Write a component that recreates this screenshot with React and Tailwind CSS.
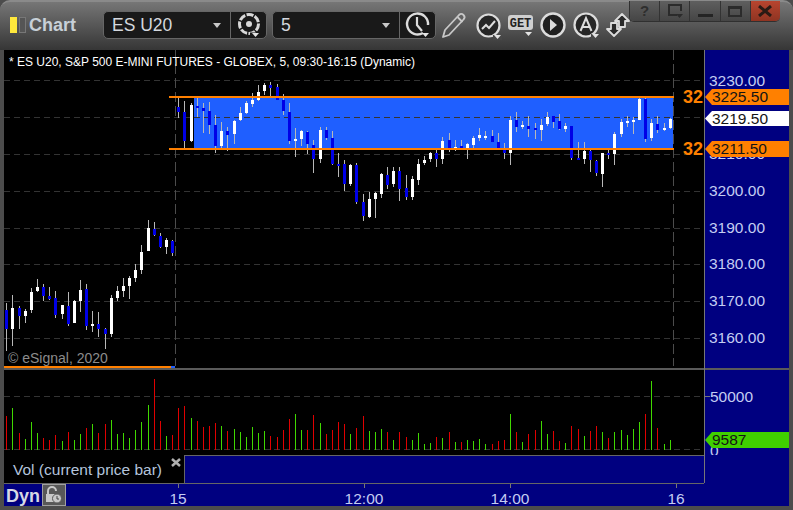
import React from 'react';

const FONT = "font-['Liberation_Sans',Arial,sans-serif]";

// candles read off the reference: [x, wick top, wick bottom, body top, body bottom, colour]
const morning = [
  [6, 303, 351, 310, 329, 'b'], [12, 295, 346, 308, 329, 'w'], [19, 306, 329, 308, 316, 'b'], [25, 309, 323, 311, 316, 'w'],
  [31, 288, 313, 292, 310, 'w'], [37, 279, 292, 287, 291, 'w'], [43, 284, 301, 287, 296, 'b'], [49, 287, 300, 296, 299, 'b'],
  [55, 291, 318, 298, 315, 'b'], [62, 305, 319, 305, 314, 'w'], [68, 292, 326, 306, 324, 'b'], [74, 300, 323, 301, 323, 'w'],
  [80, 280, 312, 290, 301, 'w'], [86, 284, 330, 289, 326, 'b'], [92, 311, 332, 324, 326, 'w'], [98, 312, 337, 324, 329, 'b'],
  [105, 328, 349, 329, 334, 'b'], [111, 295, 337, 298, 334, 'w'], [117, 286, 301, 291, 298, 'w'], [123, 278, 297, 286, 291, 'w'],
  [129, 276, 299, 278, 286, 'w'], [135, 264, 282, 270, 278, 'w'], [141, 245, 274, 252, 270, 'w'], [148, 220, 251, 228, 251, 'w'],
  [154, 222, 236, 229, 235, 'b'], [160, 233, 248, 236, 247, 'b'], [166, 238, 254, 240, 247, 'w'], [172, 240, 256, 241, 253, 'b'],
];

const offsetCandles = (rows, dx, dy) =>
  rows.map(([x, a, b, c, d, k]) => [Math.round(x / 3 + dx), a / 3 + dy, b / 3 + dy, c / 3 + dy, d / 3 + dy, k]);

const midday = offsetCandles([
  [55, 66, 129, 96, 111, 'b'], [73, 78, 222, 111, 198, 'b'], [94, 84, 201, 90, 198, 'w'], [112, 69, 126, 93, 99, 'b'],
  [130, 84, 174, 99, 108, 'b'], [148, 81, 177, 108, 150, 'b'], [166, 120, 234, 150, 213, 'b'], [184, 141, 219, 168, 213, 'w'],
  [202, 156, 228, 168, 180, 'b'], [223, 135, 207, 138, 177, 'w'], [241, 96, 138, 114, 135, 'w'], [259, 78, 117, 84, 114, 'w'],
  [277, 54, 96, 75, 87, 'w'], [295, 30, 78, 51, 75, 'w'], [313, 24, 60, 30, 48, 'w'], [331, 21, 63, 30, 39, 'b'],
  [352, 27, 75, 36, 75, 'b'], [370, 57, 120, 75, 108, 'b'], [388, 84, 207, 111, 198, 'b'], [406, 159, 246, 192, 198, 'w'],
  [424, 165, 213, 168, 192, 'w'], [442, 168, 237, 171, 207, 'b'], [460, 195, 294, 210, 252, 'b'], [481, 156, 264, 165, 252, 'w'],
  [499, 156, 195, 165, 189, 'b'], [517, 168, 270, 189, 267, 'b'], [535, 234, 306, 267, 273, 'b'], [553, 255, 348, 267, 327, 'b'],
  [571, 267, 333, 270, 327, 'w'], [589, 264, 387, 270, 381, 'b'], [610, 357, 438, 381, 423, 'b'], [628, 351, 429, 372, 426, 'w'],
  [646, 351, 429, 354, 372, 'w'], [664, 294, 369, 297, 357, 'w'], [682, 276, 342, 300, 330, 'b'], [700, 276, 336, 288, 327, 'w'],
  [718, 276, 378, 288, 342, 'b'], [739, 300, 375, 339, 366, 'b'], [757, 303, 375, 312, 366, 'w'], [775, 252, 330, 267, 315, 'w'],
  [793, 243, 270, 255, 264, 'w'],
], 160, 75);

const afternoon = offsetCandles([
  [1, 231, 261, 234, 252, 'w'], [19, 222, 276, 234, 252, 'b'], [37, 186, 267, 198, 252, 'w'], [58, 174, 231, 195, 219, 'b'],
  [76, 195, 228, 216, 222, 'w'], [94, 195, 219, 213, 219, 'b'], [112, 204, 252, 207, 219, 'w'], [130, 183, 219, 189, 210, 'w'],
  [148, 159, 198, 180, 189, 'w'], [166, 168, 195, 183, 189, 'w'], [187, 165, 201, 183, 201, 'b'], [205, 174, 222, 201, 219, 'b'],
  [223, 204, 252, 219, 234, 'b'], [241, 123, 270, 135, 234, 'w'], [259, 111, 171, 135, 156, 'b'], [277, 138, 162, 150, 156, 'w'],
  [295, 123, 186, 153, 162, 'b'], [316, 144, 192, 159, 165, 'b'], [334, 132, 198, 150, 165, 'w'], [352, 111, 153, 126, 147, 'w'],
  [370, 123, 159, 123, 141, 'b'], [388, 117, 165, 138, 162, 'b'], [406, 144, 171, 153, 162, 'w'], [424, 153, 255, 153, 249, 'b'],
  [445, 201, 255, 249, 255, 'b'], [463, 201, 267, 228, 252, 'w'], [481, 225, 291, 228, 255, 'b'], [499, 255, 303, 258, 294, 'b'],
  [517, 234, 336, 234, 297, 'w'], [535, 219, 252, 234, 240, 'b'], [553, 171, 270, 177, 237, 'w'], [574, 132, 186, 141, 177, 'w'],
  [592, 123, 156, 138, 144, 'w'], [610, 126, 177, 135, 141, 'w'], [628, 66, 135, 72, 135, 'w'], [646, 66, 201, 72, 192, 'b'],
  [664, 132, 198, 144, 189, 'w'], [682, 123, 174, 147, 165, 'b'], [703, 144, 168, 159, 165, 'w'], [721, 129, 162, 132, 159, 'w'],
], 430, 75);

const candles = [...morning, ...midday, ...afternoon];

// volume bars: [x, top, colour] as read from the two lower crops
const volLeft = [
  [19, 153, 'r'], [37, 129, 'g'], [58, 204, 'r'], [76, 222, 'g'], [94, 171, 'g'], [112, 204, 'g'], [130, 219, 'r'], [148, 225, 'r'],
  [166, 210, 'r'], [187, 228, 'g'], [205, 201, 'r'], [223, 225, 'g'], [241, 207, 'g'], [259, 189, 'r'], [277, 177, 'g'], [295, 204, 'r'],
  [316, 177, 'r'], [334, 165, 'g'], [352, 207, 'g'], [370, 204, 'g'], [388, 219, 'g'], [406, 195, 'g'], [424, 171, 'g'], [445, 120, 'g'],
  [463, 42, 'r'], [481, 168, 'r'], [499, 213, 'g'], [517, 210, 'r'], [535, 129, 'r'], [553, 123, 'r'], [574, 159, 'g'], [592, 168, 'r'],
  [610, 186, 'r'], [628, 183, 'r'], [646, 174, 'r'], [664, 183, 'g'], [682, 198, 'r'], [703, 192, 'g'], [721, 201, 'g'], [739, 216, 'g'],
  [757, 186, 'g'], [775, 204, 'g'], [793, 198, 'g'], [811, 213, 'r'], [832, 216, 'r'], [850, 195, 'r'], [868, 162, 'r'], [886, 147, 'g'],
  [904, 195, 'g'], [922, 195, 'r'], [940, 150, 'r'], [961, 174, 'g'], [979, 207, 'r'], [997, 195, 'r'], [1015, 171, 'r'], [1033, 177, 'r'],
];
const volRight = [
  [1, 207, 'g'], [19, 189, 'r'], [40, 153, 'r'], [58, 198, 'g'], [76, 201, 'g'], [94, 192, 'g'], [112, 201, 'r'], [130, 225, 'g'],
  [148, 201, 'r'], [169, 216, 'r'], [187, 225, 'g'], [205, 204, 'g'], [223, 237, 'g'], [241, 234, 'g'], [259, 216, 'r'], [277, 219, 'g'],
  [298, 201, 'r'], [316, 231, 'g'], [334, 231, 'r'], [352, 225, 'g'], [370, 228, 'g'], [388, 222, 'g'], [406, 237, 'g'], [427, 237, 'r'],
  [445, 228, 'r'], [463, 225, 'r'], [481, 147, 'g'], [499, 201, 'r'], [517, 231, 'g'], [535, 207, 'r'], [556, 195, 'r'], [574, 168, 'g'],
  [592, 207, 'g'], [610, 198, 'r'], [628, 228, 'r'], [646, 234, 'g'], [664, 183, 'r'], [685, 192, 'r'], [703, 213, 'g'], [721, 198, 'r'],
  [739, 183, 'r'], [757, 201, 'g'], [775, 219, 'r'], [793, 201, 'g'], [814, 195, 'g'], [832, 210, 'g'], [850, 192, 'g'], [868, 171, 'g'],
  [886, 147, 'r'], [904, 48, 'g'], [922, 189, 'r'], [943, 237, 'g'], [961, 225, 'g'],
];
const volBars = [
  ...volLeft.map(([x, t, k]) => [Math.round(x / 3), t / 3 + 365, k]),
  ...volRight.map(([x, t, k]) => [Math.round(x / 3 + 350), t / 3 + 365, k]),
];

const gridYs = [80.5, 117.5, 154.5, 191.5, 228.5, 264.5, 301.5, 338.5];

const PriceChart = () => (
  <svg width="700" height="316" viewBox="4 50 700 316" shapeRendering="crispEdges" className="block">
    <rect x="194" y="97" width="479" height="52" fill="#1f5fff" />
    {gridYs.map((y) => (
      <line key={y} x1="4" x2="704" y1={y} y2={y} stroke="#333" strokeDasharray="6 4" />
    ))}
    <line x1="175.5" x2="175.5" y1="50" y2="366" stroke="#4c4c4c" strokeDasharray="10 4" />
    <line x1="673.5" x2="673.5" y1="50" y2="366" stroke="#4c4c4c" strokeDasharray="10 4" />
    {candles.map(([x, top, bottom, bodyTop, bodyBottom, kind], i) => (
      <g key={i}>
        <rect x={x} y={top} width="1" height={bottom - top} fill="#b8b8b8" />
        <rect
          x={x - 1}
          y={bodyTop}
          width="3"
          height={Math.max(bodyBottom - bodyTop, 2)}
          fill={kind === 'w' ? '#ffffff' : '#0000e6'}
        />
      </g>
    ))}
    <rect x="169" y="96" width="505" height="2" fill="#ff8000" />
    <rect x="169" y="148" width="505" height="2" fill="#ff8000" />
  </svg>
);

const VolumeChart = () => (
  <svg width="700" height="85" viewBox="4 370 700 85" shapeRendering="crispEdges" className="block">
    <line x1="4" x2="704" y1="396.5" y2="396.5" stroke="#333" strokeDasharray="6 4" />
    <line x1="4" x2="704" y1="449.5" y2="449.5" stroke="#333" strokeDasharray="6 4" />
    {volBars.map(([x, top, kind], i) => (
      <rect key={i} x={x} y={top} width="1" height={450 - top} fill={kind === 'g' ? '#40d800' : '#e00000'} />
    ))}
  </svg>
);

const Caret = ({ x, y }) => <path d={`M${x} ${y}h7l-3.5 4z`} fill="#e4e4e4" stroke="none" />;

const GearIcon = () => (
  <svg width="30" height="30" viewBox="0 0 30 30" fill="none" stroke="#d8d8d8">
    <circle cx="15" cy="14" r="9.5" strokeWidth="3" strokeDasharray="7 1.4" />
    <circle cx="15" cy="14" r="3" fill="#d8d8d8" stroke="none" />
    <path d="M16 24h9v-3" stroke="#1a1a1a" strokeWidth="3" />
    <Caret x={18} y={23} />
  </svg>
);

const ClockIcon = () => (
  <svg width="30" height="30" viewBox="0 0 30 30" fill="none" stroke="#dcdcdc">
    <path d="M20 23A10.5 10.5 0 1 1 25 15" strokeWidth="2.4" />
    <path d="M14 7v8l5 6" strokeWidth="2.2" />
    <Caret x={19} y={23} />
  </svg>
);

const PencilIcon = () => (
  <svg width="28" height="28" viewBox="0 0 28 28" fill="none" stroke="#c8c8c8" strokeWidth="1.8" strokeLinejoin="round">
    <path d="M3 26l2-7L19 4c1.500-1.500 3-1.500 4.500 0s1.500 3 0 4.500L9 24z" />
    <path d="M17.500 6l5 5" />
  </svg>
);

const TrendIcon = () => (
  <svg width="30" height="30" viewBox="0 0 30 30" fill="none" stroke="#dcdcdc">
    <circle cx="14.500" cy="14.500" r="11" fill="#262626" strokeWidth="2.2" />
    <path d="M8 18l4-4 3 3 6-7" strokeWidth="2" />
    <path d="M19 24h9v5h-9z" fill="#484848" stroke="none" />
    <Caret x={20} y={24} />
  </svg>
);

const GetIcon = () => (
  <svg width="28" height="30" viewBox="0 0 28 30" fill="none">
    <rect x="1" y="4" width="25" height="15" rx="3" fill="#cfcfcf" />
    <text x="13.500" y="16" textAnchor="middle" fontFamily="Liberation Mono" fontWeight="700" fontSize="12" fill="#222">GET</text>
    <Caret x={18} y={21} />
  </svg>
);

const PlayIcon = () => (
  <svg width="28" height="28" viewBox="0 0 28 28" fill="none">
    <circle cx="14" cy="14" r="11.500" fill="#202020" stroke="#dcdcdc" strokeWidth="2.4" />
    <path d="M11 8l7 6-7 6z" fill="#dcdcdc" />
  </svg>
);

const LetterIcon = () => (
  <svg width="30" height="30" viewBox="0 0 30 30" fill="none">
    <circle cx="14" cy="14" r="11.500" fill="#262626" stroke="#dcdcdc" strokeWidth="2.200" />
    <path d="M8.500 20L14 7l5.500 13M10.500 16h7" stroke="#dcdcdc" strokeWidth="2" />
    <path d="M19 23h9v6h-9z" fill="#484848" />
    <Caret x={20} y={23} />
  </svg>
);

const SwapIcon = () => (
  <svg width="28" height="28" viewBox="0 0 28 28" fill="#2a2a2a" stroke="#dcdcdc" strokeWidth="1.800" strokeLinejoin="round">
    <path d="M17 3l7 7h-4v6h-6v-6h-4z" />
    <path d="M9 25L2 18h4v-6h6v6h4z" />
  </svg>
);

const Combo = ({ label, textSize, icon }) => (
  <div className="h-[28px] w-[164px] flex rounded-[5px] border border-[#666] bg-[#191919]">
    <div className={`w-[127px] flex items-center justify-between pl-2 pr-[9px] border-r border-[#666] ${textSize} text-[#d4d8de]`}>
      <span>{label}</span>
      <span className="w-0 h-0 border-x-[4.5px] border-x-transparent border-t-[5px] border-t-[#c8c8c8]" />
    </div>
    <div className="flex-1 flex items-center justify-center">{icon}</div>
  </div>
);

const WindowButton = ({ children, close }) => (
  <div
    className={`flex-1 h-full flex items-center justify-center border-r border-[#333] last:border-r-0 ${
      close ? 'bg-gradient-to-b from-[#b8452f] to-[#8f3422]' : 'bg-gradient-to-b from-[#5f5f5f] to-[#454545]'
    }`}
  >
    {children}
  </div>
);

const WindowButtons = () => (
  <div className="absolute -top-[1px] right-[13px] w-[151px] h-[21px] flex rounded-b-[5px] overflow-hidden border-b border-l border-[#303030]">
    <WindowButton>
      <span className="text-[15px] font-bold text-[#2e2e2e]">?</span>
    </WindowButton>
    <WindowButton>
      <svg width="16" height="16" viewBox="0 0 16 16" fill="none">
        <path d="M10 12H2V2h12v6" stroke="#2b2b2b" strokeWidth="2" />
        <path d="M9 11h7l-3.500 4z" fill="#2b2b2b" />
      </svg>
    </WindowButton>
    <WindowButton>
      <span className="w-[15px] h-[3px] bg-[#242424] mt-[8px]" />
    </WindowButton>
    <WindowButton>
      <span className="w-[14px] h-[11px] border-2 border-t-[3px] border-[#2b2b2b]" />
    </WindowButton>
    <WindowButton close>
      <svg width="14" height="12" viewBox="0 0 14 12" stroke="#2a1a14" strokeWidth="3">
        <path d="M1 1l12 10M13 1L1 11" />
      </svg>
    </WindowButton>
  </div>
);

const TitleBar = () => (
  <div className="relative h-[50px] shrink-0 flex items-start pt-[9px] pl-[10px] rounded-t-[10px] border-t-2 border-[#8a8a8a] bg-gradient-to-b from-[#767676] via-[#565656] to-[#363636]">
    <span className="mt-[6px] w-[7px] h-[16px] bg-[#ffe83c]" />
    <span className="mt-[6px] ml-[2px] w-[7px] h-[16px] bg-[#555] border border-[#777]" />
    <span className="ml-[3px] w-[74px] h-[28px] leading-[28px] text-[18px] font-bold text-[#c8d0d8]">Chart</span>
    <Combo label="ES U20" textSize="text-[17.5px]" icon={<GearIcon />} />
    <div className="w-[5px]" />
    <Combo label="5" textSize="text-[17.5px]" icon={<ClockIcon />} />
    <div className="ml-[4px] w-[28px] h-[28px]"><PencilIcon /></div>
    <div className="ml-[6px] w-[30px] h-[30px]"><TrendIcon /></div>
    <div className="ml-[3px] w-[28px] h-[30px]"><GetIcon /></div>
    <div className="ml-[4px] w-[28px] h-[28px]"><PlayIcon /></div>
    <div className="ml-[5px] w-[30px] h-[30px]"><LetterIcon /></div>
    <div className="ml-[3px] w-[28px] h-[28px]"><SwapIcon /></div>
    <WindowButtons />
  </div>
);

const PriceTag = ({ top, height, bg, children }) => (
  <div
    style={{ top, height }}
    className={`absolute left-0 w-[84px] pl-[7px] flex items-center text-[15.5px] text-[#141414] ${bg} [clip-path:polygon(0_50%,7px_0,100%_0,100%_100%,7px_100%)]`}
  >
    {children}
  </div>
);

const prices = ['3230.00', '3220.00', '3210.00', '3200.00', '3190.00', '3180.00', '3170.00', '3160.00'];

const PriceAxis = () => (
  <div className="relative h-[318px] pt-[12.5px] pl-[4px] overflow-hidden">
    {prices.map((p) => (
      <div key={p} className="h-[36.75px] leading-[36.75px] text-[15.5px] text-[#c4cdf2]">{p}</div>
    ))}
    <PriceTag top={39} height={16} bg="bg-[#ff8000]">3225.50</PriceTag>
    <PriceTag top={61} height={15} bg="bg-white">3219.50</PriceTag>
    <PriceTag top={91} height={16} bg="bg-[#ff8000]">3211.50</PriceTag>
  </div>
);

const VolumeAxis = () => (
  <div className="relative h-[85px] overflow-hidden">
    <div className="absolute top-[26px] left-0 w-[5px] h-px bg-[#777]" />
    <div className="absolute top-[17px] left-[5px] h-[20px] leading-[20px] text-[15.5px] text-[#c4cdf2]">50000</div>
    <div className="absolute top-[71px] left-[5px] h-[20px] leading-[20px] text-[15.5px] text-[#c4cdf2]">0</div>
    <PriceTag top={62} height={16} bg="bg-[#40d000]">9587</PriceTag>
  </div>
);

const TimeLabel = ({ label, left, width }) => (
  <div style={{ marginLeft: left, width }} className="h-full flex flex-col items-center text-[15.5px] text-[#c4cdf2]">
    <span className="w-px h-[4px] shrink-0 bg-[#777]" />
    <span className="leading-[22px]">{label}</span>
  </div>
);

const LockIcon = () => (
  <svg width="20" height="20" viewBox="0 0 20 20" fill="none">
    <path d="M4 9V6a4 4 0 0 1 8 0" stroke="#c8c8c8" strokeWidth="2" />
    <rect x="2" y="9" width="9" height="8" fill="#c8c8c8" />
    <circle cx="13" cy="13.500" r="4.500" fill="#c8c8c8" stroke="#585858" />
    <path d="M13 11v3h2" stroke="#444" />
  </svg>
);

const TimeAxis = () => (
  <div className="h-[23px] shrink-0 flex">
    <div className="w-[700px] flex border-t border-[#666]">
      <span className="w-[38px] pl-[2px] text-[18px] font-bold leading-[24px] text-[#d6d8e4]">Dyn</span>
      <div className="w-[24px] h-[22px] flex items-center justify-center bg-[#585858] border border-[#a0a0a0]">
        <LockIcon />
      </div>
      <TimeLabel label="15" left={92} width={40} />
      <TimeLabel label="12:00" left={136} width={60} />
      <TimeLabel label="14:00" left={86} width={60} />
      <TimeLabel label="16" left={116} width={40} />
    </div>
  </div>
);

export default function App() {
  return (
    <div className={`w-[793px] h-[510px] flex flex-col overflow-hidden bg-[#4c4c4c] ${FONT}`}>
      <TitleBar />
      <div className="mx-[4px] h-[456px] bg-[#000080] flex flex-col">
        <div className="h-[433px] flex">
          <div className="w-[700px] flex flex-col">
            <div className="relative h-[316px] bg-black overflow-hidden">
              <PriceChart />
              <span className="absolute left-[5px] top-[4px] text-[12px] leading-[16px] text-white whitespace-nowrap">
                * ES U20, S&amp;P 500 E-MINI FUTURES - GLOBEX, 5, 09:30-16:15 (Dynamic)
              </span>
              <span className="absolute left-[679px] top-[36px] text-[18px] leading-[22px] font-bold text-[#ff8000]">32</span>
              <span className="absolute left-[679px] top-[88px] text-[18px] leading-[22px] font-bold text-[#ff8000]">32</span>
              <span className="absolute left-[4px] top-[299px] text-[14px] leading-[18px] text-[#8c8c8c] whitespace-nowrap">© eSignal, 2020</span>
            </div>
            <div className="h-[2px] flex">
              <div className="w-[167px] bg-[#ff8000]" />
              <div className="w-[4px] bg-[#1f5fff]" />
              <div className="flex-1 bg-black" />
            </div>
            <div className="h-[2px] bg-[#5a5a5a]" />
            <div className="h-[85px] bg-black">
              <VolumeChart />
            </div>
            <div className="h-[28px] flex">
              <div className="relative w-[180px] bg-black pl-[9px] text-[15.5px] leading-[30px] text-[#b4c4dc]">
                Vol (current price bar)
                <svg width="10" height="9" viewBox="0 0 10 9" stroke="#b0b0b0" strokeWidth="2.500" className="absolute left-[167px] top-[3px]">
                  <path d="M1 1l8 7M9 1L1 8" />
                </svg>
              </div>
              <div className="flex-1 border-l border-t border-[#666]" />
            </div>
          </div>
          <div className="flex-1 border-l border-[#777]">
            <PriceAxis />
            <div className="h-[2px] bg-[#5a5a5a]" />
            <VolumeAxis />
          </div>
        </div>
        <TimeAxis />
      </div>
    </div>
  );
}
